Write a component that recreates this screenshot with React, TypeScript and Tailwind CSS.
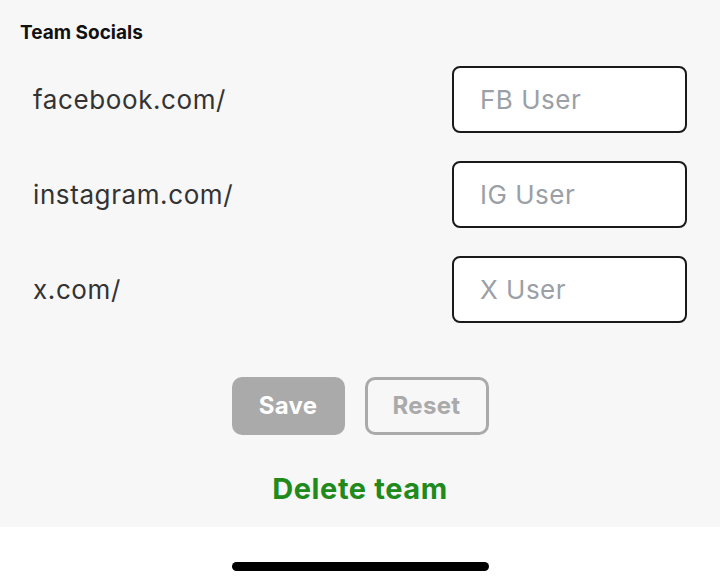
import React from 'react';

const socials = [
  { label: 'facebook.com/', placeholder: 'FB User' },
  { label: 'instagram.com/', placeholder: 'IG User' },
  { label: 'x.com/', placeholder: 'X User' },
];

export default function App() {
  return (
    <div className="w-[720px] h-[584px] bg-white flex flex-col font-['Inter',sans-serif]">
      <div className="bg-[#f7f7f7] h-[527px] flex flex-col">
        <h2 className="pl-5 pt-[21px] text-[19px] leading-[24px] font-bold text-[#111]">Team Socials</h2>

        <div className="flex flex-col gap-[28px] mt-[21px]">
          {socials.map((s) => (
            <div key={s.label} className="flex items-center justify-between pl-[33px] pr-[33px]">
              <span className="text-[26px] text-[#333] tracking-[0.6px]">{s.label}</span>
              <input
                placeholder={s.placeholder}
                className="w-[235px] h-[67px] border-2 border-[#1a1a1a] rounded-[8px] bg-white px-[26px] text-[26px] tracking-[0.5px] placeholder:text-[#9aa0a6] outline-none"
              />
            </div>
          ))}
        </div>

        <div className="flex justify-center gap-[20px] mt-[54px]">
          <button className="w-[113px] h-[58px] rounded-[10px] bg-[#aaaaaa] text-white text-[24px] font-bold tracking-[0.3px]">
            Save
          </button>
          <button className="w-[124px] h-[58px] rounded-[10px] border-[3px] border-[#aaaaaa] text-[#aaaaaa] text-[24px] font-bold tracking-[0.3px]">
            Reset
          </button>
        </div>

        <div className="flex justify-center mt-[34px]">
          <button className="text-[29px] font-bold text-[#208a1c] leading-[40px] tracking-[0.6px]">Delete team</button>
        </div>
      </div>

      <div className="flex-1 flex items-end justify-center pb-[13px]">
        <div className="w-[257px] h-[9px] rounded-full bg-black" />
      </div>
    </div>
  );
}
